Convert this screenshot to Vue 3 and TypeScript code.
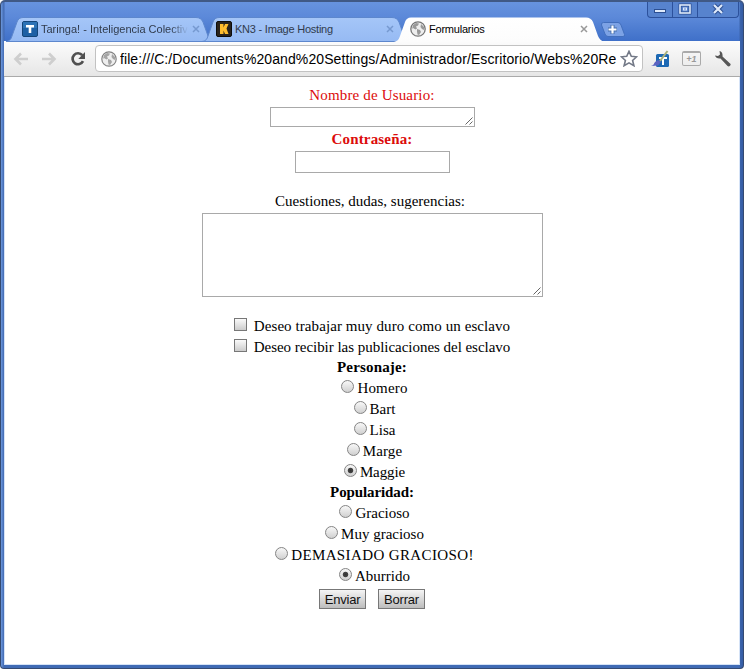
<script setup lang="ts">
import { ref } from "vue";

interface Option { id: string; label: string }

const tabs = [
  { id: "taringa", title: "Taringa! - Inteligencia Colectiva" },
  { id: "kn3", title: "KN3 - Image Hosting" },
  { id: "form", title: "Formularios" },
];

const personajes: Option[] = [
  { id: "homero", label: "Homero" },
  { id: "bart", label: "Bart" },
  { id: "lisa", label: "Lisa" },
  { id: "marge", label: "Marge" },
  { id: "maggie", label: "Maggie" },
];

const popularidades: Option[] = [
  { id: "gracioso", label: "Gracioso" },
  { id: "muy", label: "Muy gracioso" },
  { id: "demasiado", label: "DEMASIADO GRACIOSO!" },
  { id: "aburrido", label: "Aburrido" },
];

const url = "file:///C:/Documents%20and%20Settings/Administrador/Escritorio/Webs%20Rec";
const usuario = ref("");
const clave = ref("");
const dudas = ref("");
const trabajar = ref(false);
const recibir = ref(false);
const personaje = ref("maggie");
const popularidad = ref("aburrido");

function borrar() {
  usuario.value = "";
  clave.value = "";
  dudas.value = "";
  trabajar.value = false;
  recibir.value = false;
  personaje.value = "maggie";
  popularidad.value = "aburrido";
}
</script>

<template>
  <div class="window">
    <div class="window-buttons">
      <span class="win-btn"><svg width="25" height="17"><rect x="6.5" y="9.5" width="11" height="3" fill="#dfeafb" stroke="#2c4f92" /></svg></span>
      <span class="win-btn"><svg width="25" height="17"><rect x="7" y="5" width="10" height="8" fill="none" stroke="#2c4f92" stroke-width="3" /><rect x="7" y="5" width="10" height="8" fill="none" stroke="#dfeafb" stroke-width="1.6" /><rect x="10.5" y="8" width="3" height="2" fill="none" stroke="#dfeafb" /></svg></span>
      <span class="win-btn close"><svg width="40" height="17"><path d="M16 5l8 8M24 5l-8 8" stroke="#2c4f92" stroke-width="4.2" /><path d="M16 5l8 8M24 5l-8 8" stroke="#dfeafb" stroke-width="2.2" /></svg></span>
    </div>

    <div class="tab-strip">
      <div v-for="tab in tabs" :key="tab.id" class="tab" :class="tab.id">
        <svg class="tab-shape" width="212" height="25" viewBox="0 0 212 25">
          <path v-if="tab.id === 'form'" d="M0 25C4 24 5 22 6 19L11 5Q12.500 .5 17 .5H192Q197 .5 199 5L204 19Q206 24 211 25Z" fill="url(#activeTab)" />
          <path v-else d="M0 24.500C4 24 5 22 6 19L11 5Q12.500 .5 17 .5H190Q195 .5 197 5L202 19Q204 24 209 24.500Z" fill="url(#idleTab)" stroke="#5d87cd" />
          <defs>
            <linearGradient id="activeTab" x2="0" y2="1"><stop stop-color="#fff" /><stop offset="1" stop-color="#fcfcfc" /></linearGradient>
            <linearGradient id="idleTab" x2="0" y2="1"><stop stop-color="#a5c6f8" /><stop offset="1" stop-color="#96baf3" /></linearGradient>
          </defs>
        </svg>
        <svg v-if="tab.id === 'taringa'" class="favicon" width="16" height="16">
          <rect x=".5" y=".5" width="15" height="15" rx="1.500" fill="#1d60a5" stroke="#144579" />
          <path d="M1 1h14v6H1z" fill="#3982c4" opacity=".55" />
          <path d="M4 4h8v2.500H9.300V12H6.700V6.500H4z" fill="#fff" />
        </svg>
        <svg v-else-if="tab.id === 'kn3'" class="favicon" width="16" height="16">
          <rect x=".5" y=".5" width="15" height="15" rx="1.500" fill="#29231d" stroke="#0d0c0b" />
          <path d="M4 3h3.500v3.500L9 3h3.500l-2 4.500L12.500 13H9L7.500 9.500V13H4z" fill="#ffbd2e" />
        </svg>
        <svg v-else class="favicon" width="16" height="16">
          <circle cx="8" cy="8" r="7.200" fill="#eee" stroke="#777" stroke-width="1.300" />
          <path d="M3 4l3-2 3 .5-1 2-2 1 1 2-1.500 1L3 7 2 8zM7 8l3 1 1 2-2 3-1.500-.5-.5-3zM11 3l3 3v3l-2-1-1.500-2z" fill="#999" />
        </svg>
        <span class="tab-title">{{ tab.title }}</span>
        <svg class="tab-close" width="8" height="8"><path d="M1 1l6 6M7 1l-6 6" stroke="currentColor" stroke-width="1.500" /></svg>
      </div>
      <svg class="new-tab" width="26" height="16">
        <path d="M3.500.5H18Q20 .5 21 3l3.500 9.500Q25 14.500 23 14.500H8Q6 14.500 5 12L1.500 3Q1 .5 3.500.5z" fill="#7ca2e5" stroke="#426fbd" />
        <path d="M12.500 3v9M8 7.500h9" stroke="#456fae" stroke-width="4" />
        <path d="M12.500 3.500v8M8.500 7.500h8" stroke="#fff" stroke-width="2.200" />
      </svg>
    </div>

    <div class="toolbar">
      <svg class="nav" width="16" height="14"><path d="M15 7H3M8 1.500L2.500 7 8 12.500" fill="none" stroke="#cecece" stroke-width="2.600" /></svg>
      <svg class="nav forward" width="16" height="14"><path d="M1 7h12M8 1.500L13.500 7 8 12.500" fill="none" stroke="#cecece" stroke-width="2.600" /></svg>
      <svg class="reload" width="16" height="16"><path d="M12.300 4.200A5.500 5.500 0 1 0 13 10.200" fill="none" stroke="#505050" stroke-width="2.700" /><path d="M15 1v7H8.300z" fill="#505050" /></svg>
      <div class="omnibox">
        <svg class="globe" width="16" height="16">
          <circle cx="8" cy="8" r="7.200" fill="#eee" stroke="#848484" stroke-width="1.200" />
          <path d="M3 4l3-2 3 .5-1 2-2 1 1 2-1.500 1L3 7 2 8zM7 8l3 1 1 2-2 3-1.500-.5-.5-3zM11 3l3 3v3l-2-1-1.500-2z" fill="#a5a5a5" />
        </svg>
        <span class="url">{{ url }}</span>
        <svg class="star" width="18" height="17"><path d="M9 1.300l2.300 5 5.300.5-4 3.700 1.300 5.200L9 12.900l-4.900 2.800 1.300-5.200-4-3.700 5.300-.5z" fill="#fff" stroke="#737987" stroke-width="1.600" /></svg>
      </div>
      <svg class="ext-taringa" width="20" height="18">
        <rect x="5" y="4" width="13" height="13" rx="1.500" fill="#1d69b4" />
        <path d="M8 7h8v2h-3v6h-2V9H8z" fill="#fff" />
        <path d="M16.500 1L9 11" stroke="#a9b07b" stroke-width="2" />
        <path d="M7 10l3 2-3 3.500-7 .5q3-1 4-4z" fill="#5a62c0" />
      </svg>
      <div class="plus-one">+1</div>
      <svg class="wrench" width="17" height="17"><path d="M1 5.500Q2 9 6.500 8.500L13.500 16Q15 17 16.200 15.500T15.500 13L8.500 6.500Q9 2 5.500 1L6 4.500 4 6z" fill="#575757" /></svg>
    </div>

    <form class="page" @submit.prevent>
      <label class="line red user-label" for="usuario">Nombre de Usuario:</label>
      <span class="area user">
        <textarea id="usuario" v-model="usuario"></textarea>
        <svg class="grip" width="8" height="8"><path d="M.5 7.500l7-7M4.500 7.500l3-3" stroke="#666" /></svg>
      </span>
      <label class="line red bold password-label" for="clave">Contraseña:</label>
      <input id="clave" v-model="clave" class="password" type="password" />
      <label class="line questions-label" for="dudas">Cuestiones, dudas, sugerencias:</label>
      <span class="area questions">
        <textarea id="dudas" v-model="dudas"></textarea>
        <svg class="grip" width="8" height="8"><path d="M.5 7.500l7-7M4.500 7.500l3-3" stroke="#666" /></svg>
      </span>

      <div class="group checks">
        <label class="option"><input v-model="trabajar" type="checkbox" /><span class="work">Deseo trabajar muy duro como un esclavo</span></label>
        <label class="option"><input v-model="recibir" type="checkbox" /><span class="news">Deseo recibir las publicaciones del esclavo</span></label>
      </div>
      <div class="group">
        <div class="option bold personaje">Personaje:</div>
        <label v-for="p in personajes" :key="p.id" class="option">
          <input v-model="personaje" type="radio" name="personaje" :value="p.id" /><span :class="p.id">{{ p.label }}</span>
        </label>
      </div>
      <div class="group">
        <div class="option bold popularidad">Popularidad:</div>
        <label v-for="p in popularidades" :key="p.id" class="option">
          <input v-model="popularidad" type="radio" name="popularidad" :value="p.id" /><span :class="p.id">{{ p.label }}</span>
        </label>
      </div>
      <div class="buttons">
        <button type="submit">Enviar</button>
        <button type="button" @click="borrar">Borrar</button>
      </div>
    </form>
  </div>
</template>

<style>
body {
  background: #fff;
}
</style>

<style scoped>
.window {
  box-sizing: border-box;
  position: relative;
  width: 744px;
  height: 669px;
  padding: 16px 3px 3px;
  display: flex;
  flex-direction: column;
  overflow: hidden;
  border: 1px solid #354a71;
  border-top: 2px solid #405986;
  border-radius: 5px 5px 4px 4px;
  background: linear-gradient(90deg, #6c98dd 0, #4169b2 3px, transparent 4px, transparent 738px, #3c65ad 739px, #345ba3 742px),
    linear-gradient(#6793df 0, #5c89d9 15px, #3e6fc8 40px, #406bb5 100%);
  font-family: "Liberation Sans", Arial, sans-serif;
}

.window-buttons {
  position: absolute;
  top: -2px;
  right: 4px;
  display: flex;
  height: 17px;
  border: 1px solid #2c519c;
  border-top: 0;
  border-radius: 0 0 4px 4px;
  background: #5783ce;
}

.win-btn {
  width: 24px;
  border-right: 1px solid #2c519c;
}

.win-btn.close {
  width: 40px;
  border: 0;
}

.win-btn svg {
  display: block;
}

.tab-strip {
  display: flex;
  height: 23px;
  flex: none;
  padding-left: 4px;
}

.tab {
  position: relative;
  display: flex;
  align-items: center;
  box-sizing: border-box;
  width: 194px;
  height: 23px;
  padding: 0 0 2px 14px;
  flex: none;
  color: #303b4c;
}

.tab.form {
  z-index: 1;
  width: 204px;
  padding-left: 15px;
  margin-left: -1px;
  color: #000;
}

.tab-shape {
  position: absolute;
  top: -1px;
  left: 0;
}

.tab.taringa .tab-shape {
  left: -2px;
}

.tab.form .tab-shape {
  left: -1px;
}

.favicon {
  position: relative;
  margin-right: 3px;
}

.tab-title {
  position: relative;
  width: 147px;
  overflow: hidden;
  font-size: 11px;
  line-height: 16px;
  white-space: nowrap;
}

.kn3 .tab-title,
.form .tab-title {
  letter-spacing: -0.22px;
}

.tab.taringa .tab-title {
  mask-image: linear-gradient(90deg, #000 130px, transparent 147px);
}

.tab-close {
  position: relative;
  margin-left: 4px;
  color: #7699d0;
}

.form .tab-close {
  color: #999;
}

.new-tab {
  margin: 4px 0 0 1px;
}

.toolbar {
  box-sizing: border-box;
  display: flex;
  align-items: center;
  height: 36px;
  flex: none;
  padding-left: 9px;
  border-bottom: 1px solid #aaa;
  background: linear-gradient(#fcfcfc, #e6e6e6);
}

.nav.forward {
  margin-left: 12px;
}

.reload {
  margin-left: 13px;
}

.omnibox {
  box-sizing: border-box;
  display: flex;
  align-items: center;
  width: 548px;
  height: 27px;
  margin-left: 9px;
  padding: 0 4px 0 5px;
  border: 1px solid #c2c2c2;
  border-radius: 4px;
  background: #fff;
}

.url {
  width: 497px;
  margin-left: 3px;
  overflow: hidden;
  color: #000;
  font-size: 14px;
  letter-spacing: 0.09px;
  line-height: 20px;
  white-space: nowrap;
}

.star {
  margin-left: 4px;
}

.ext-taringa {
  margin-left: 8px;
}

.plus-one {
  box-sizing: border-box;
  width: 19px;
  height: 15px;
  margin-left: 11px;
  border: 1px solid #aaa;
  border-top-width: 2px;
  border-radius: 2px;
  color: #999;
  font-size: 9px;
  font-style: italic;
  font-weight: bold;
  line-height: 12px;
  text-align: center;
}

.wrench {
  margin-left: 13px;
}

.page {
  box-sizing: border-box;
  display: flex;
  flex: 1;
  flex-direction: column;
  align-items: center;
  padding-top: 8px;
  border: 1px solid #d5e3f7;
  border-top: 0;
  background: #fff;
  color: #000;
  font-family: "Liberation Serif", "Times New Roman", serif;
  font-size: 15px;
  line-height: 21px;
}

.line {
  height: 20px;
}

.red {
  color: #dc0b0b;
}

.bold {
  font-weight: bold;
}

.user-label,
.password-label,
.personaje,
.homero {
  letter-spacing: 0.16px;
}

.work,
.marge {
  letter-spacing: 0.08px;
}

.news {
  letter-spacing: -0.03px;
}

.maggie,
.popularidad {
  letter-spacing: -0.1px;
}

.demasiado {
  letter-spacing: 0.38px;
}

.area {
  position: relative;
  display: flex;
}

textarea,
.password {
  box-sizing: border-box;
  margin: 0;
  padding: 2px;
  border: 1px solid #a9a9a9;
  border-radius: 0;
  outline: none;
  background: #fff;
  resize: none;
}

.user textarea {
  width: 205px;
  height: 20px;
  margin-top: 2px;
  overflow: hidden;
}

.grip {
  position: absolute;
  right: 2px;
  bottom: 2px;
}

.password-label {
  margin-top: 2px;
}

.password {
  width: 155px;
  height: 22px;
  margin-top: 2px;
}

.questions-label {
  margin-top: 18px;
  margin-right: 4px;
}

.questions textarea {
  width: 341px;
  height: 84px;
  margin-top: 2px;
}

.group {
  display: flex;
  flex-direction: column;
  align-items: center;
}

.checks {
  margin-top: 19px;
}

.option {
  display: flex;
  height: 21px;
}

.option:last-child {
  height: 20px;
}

.option input {
  box-sizing: border-box;
  width: 13px;
  height: 13px;
  flex: none;
  appearance: none;
}

input[type="checkbox"] {
  margin: 2px 7px 0 0;
  border: 1px solid #777;
  background: linear-gradient(#fafafa, #ccc);
}

input[type="checkbox"]:checked {
  background: #777;
}

input[type="radio"] {
  margin: 2px 3px 0 5px;
  border: 1px solid #858585;
  border-radius: 50%;
  background: linear-gradient(#f8f8f8, #d0d0d0);
}

input[type="radio"]:checked {
  background: radial-gradient(circle, #333 0, #444 2.300px, transparent 3.200px), linear-gradient(#f8f8f8, #d0d0d0);
}

.buttons {
  display: flex;
  gap: 12px;
  margin-top: 3px;
}

button {
  box-sizing: border-box;
  width: 47px;
  height: 20px;
  padding: 0;
  border: 1px solid #777;
  border-radius: 0;
  background: linear-gradient(#f5f5f5, #bdbdbd);
  color: #111;
  font-family: "Liberation Sans", Arial, sans-serif;
  font-size: 13px;
  letter-spacing: -0.2px;
  line-height: 17px;
}
</style>
